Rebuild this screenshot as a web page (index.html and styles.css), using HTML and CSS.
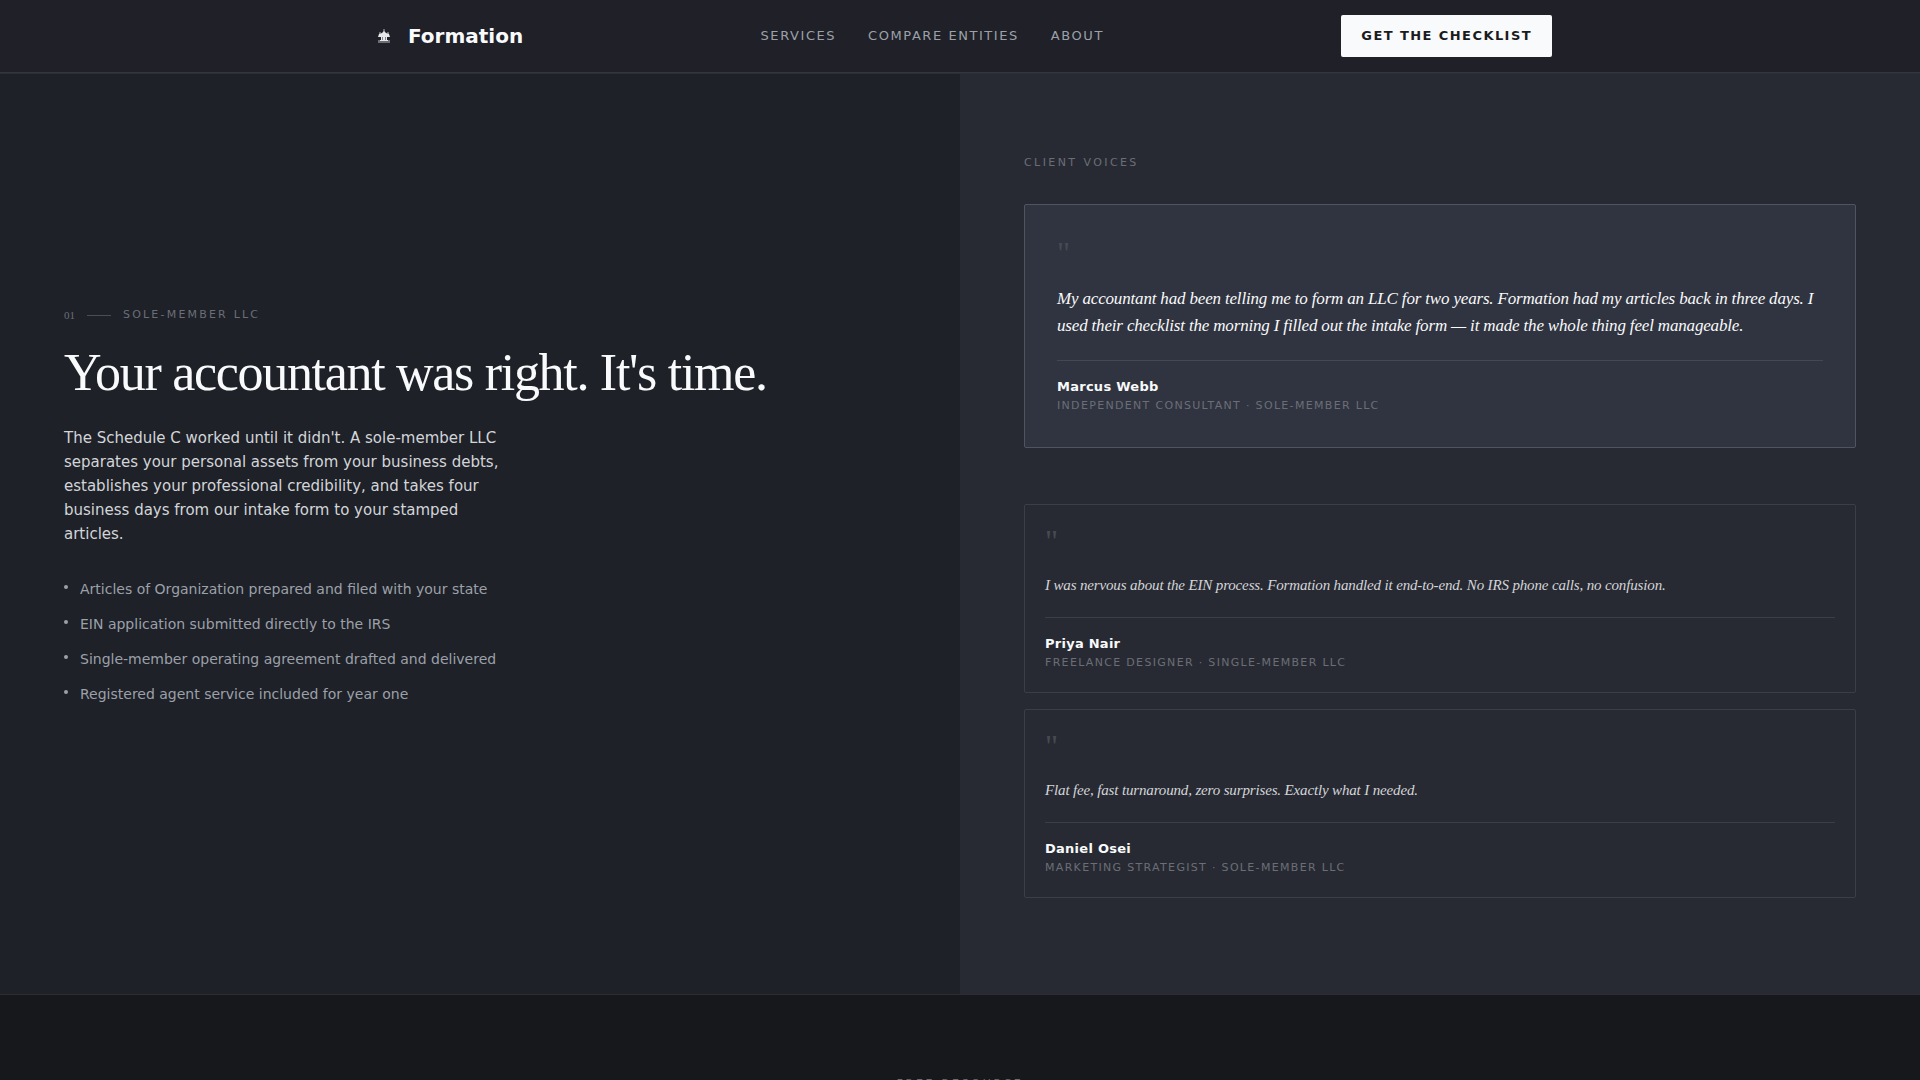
FILE: index.html
```html
<!DOCTYPE html>
<html lang="en">
<head>
  <meta charset="UTF-8" />
  <meta name="viewport" content="width=device-width, initial-scale=1.0"/>
  <title>Formation</title>
  <link rel="stylesheet" href="styles.css">
</head>
<body>

  <header class="site-header">
    <div class="header-inner">
      <a href="#" class="brand">
        <svg class="brand-mark" viewBox="0 0 32 32" aria-hidden="true">
          <path class="mark-soft" d="M15 9h2v3h-2zM11 12h2v2h-2zM19 12h2v2h-2zM10 20h3v3h-3zM19 20h3v3h-3zM13 21h6v2h-6z"/>
          <path class="mark-main" d="M16 11l2 2 3 1 1 3h-3v3h1v1h-8v-1h1v-3h-3l1-3 3-1z"/>
          <path class="mark-cut" d="M14 17h1v3h-1zM17 17h1v3h-1z"/>
        </svg>
        <span>Formation</span>
      </a>
      <nav class="site-nav">
        <a href="#services">Services</a>
        <a href="#compare">Compare Entities</a>
        <a href="#about">About</a>
      </nav>
      <button type="button" class="cta">Get the Checklist</button>
    </div>
  </header>

  <main>
    <section class="split" id="services">
      <div class="pitch">
        <div class="eyebrow">
          <span class="eyebrow-num">01</span>
          <span class="eyebrow-line"></span>
          <span class="label">Sole-Member LLC</span>
        </div>
        <h1>Your accountant was right. It's time.</h1>
        <p class="lead">The Schedule C worked until it didn't. A sole-member LLC separates your personal assets from your business debts, establishes your professional credibility, and takes four business days from our intake form to your stamped articles.</p>
        <ul class="features">
          <li>Articles of Organization prepared and filed with your state</li>
          <li>EIN application submitted directly to the IRS</li>
          <li>Single-member operating agreement drafted and delivered</li>
          <li>Registered agent service included for year one</li>
        </ul>
      </div>

      <div class="voices">
        <h2 class="label voices-title">Client Voices</h2>

        <article class="quote featured">
          <div class="quote-mark" aria-hidden="true">"</div>
          <p class="quote-text">My accountant had been telling me to form an LLC for two years. Formation had my articles back in three days. I used their checklist the morning I filled out the intake form — it made the whole thing feel manageable.</p>
          <footer>
            <div class="name">Marcus Webb</div>
            <div class="role">Independent Consultant · Sole-Member LLC</div>
          </footer>
        </article>

        <article class="quote">
          <div class="quote-mark" aria-hidden="true">"</div>
          <p class="quote-text">I was nervous about the EIN process. Formation handled it end-to-end. No IRS phone calls, no confusion.</p>
          <footer>
            <div class="name">Priya Nair</div>
            <div class="role">Freelance Designer · Single-Member LLC</div>
          </footer>
        </article>

        <article class="quote">
          <div class="quote-mark" aria-hidden="true">"</div>
          <p class="quote-text">Flat fee, fast turnaround, zero surprises. Exactly what I needed.</p>
          <footer>
            <div class="name">Daniel Osei</div>
            <div class="role">Marketing Strategist · Sole-Member LLC</div>
          </footer>
        </article>
      </div>
    </section>

    <section class="resource">
      <p class="label resource-label">Free Resource</p>
    </section>
  </main>

</body>
</html>
```
FILE: styles.css
```css
* {
  box-sizing: border-box;
  margin: 0;
  padding: 0;
}

html {
  scrollbar-width: none;
}

body {
  font-family: "DejaVu Sans", sans-serif;
  background-color: #17181b;
  color: #f9fafb;
}

a {
  color: inherit;
  text-decoration: none;
}

/* Header */
.site-header {
  background-color: #1f2028;
  border-bottom: 1px solid #33363e;
}

.header-inner {
  max-width: 1280px;
  height: 72px;
  margin: 0 auto;
  padding: 0 48px;
  display: flex;
  align-items: center;
  justify-content: space-between;
}

.brand {
  display: flex;
  align-items: center;
  gap: 8px;
  font-size: 20px;
  font-weight: bold;
}

.brand-mark {
  width: 32px;
  height: 32px;
}

.mark-soft {
  fill: #6b6d73;
}

.mark-main {
  fill: #e6e8ea;
}

.mark-cut {
  fill: #85878c;
}

.site-nav {
  display: flex;
  gap: 32px;
  padding-bottom: 2px;
  font-size: 13px;
  letter-spacing: 0.12em;
  text-transform: uppercase;
  color: #9ca0a8;
}

.cta {
  height: 42px;
  padding: 0 20px 2px;
  border: none;
  border-radius: 2px;
  background-color: #f9fafc;
  color: #1a1b20;
  font-family: inherit;
  font-size: 13px;
  font-weight: bold;
  letter-spacing: 0.11em;
  text-transform: uppercase;
  cursor: pointer;
}

/* Split section */
.split {
  display: grid;
  grid-template-columns: 1fr 1fr;
  border-top: 1px solid #2b2e36;
  border-bottom: 1px solid #2d2e33;
}

.pitch {
  display: flex;
  flex-direction: column;
  justify-content: center;
  padding: 80px 64px;
  background-color: #1e2128;
}

.label {
  font-size: 11px;
  font-weight: normal;
  line-height: 18px;
  letter-spacing: 0.2em;
  text-transform: uppercase;
  color: #6b6e77;
}

.eyebrow {
  display: flex;
  align-items: center;
  gap: 12px;
  margin-bottom: 20px;
}

.eyebrow-num {
  font-family: "Liberation Serif", serif;
  font-size: 11px;
  color: #6b6e77;
}

.eyebrow-line {
  width: 24px;
  height: 1px;
  background-color: #4b4e57;
}

h1 {
  font-family: "Liberation Serif", serif;
  font-size: 52px;
  font-weight: normal;
  line-height: 58px;
  letter-spacing: -0.025em;
  margin-bottom: 24px;
}

.lead {
  max-width: 440px;
  font-size: 15px;
  line-height: 24px;
  color: #d3d5d9;
  margin-bottom: 32px;
}

.features {
  display: grid;
  gap: 12px;
  list-style: none;
  margin-bottom: 56px;
}

.features li {
  display: flex;
  gap: 12px;
  font-size: 14px;
  line-height: 23px;
  color: #9ca0a8;
}

.features li::before {
  content: "";
  flex: none;
  width: 4px;
  height: 4px;
  margin-top: 7px;
  border-radius: 50%;
  background-color: #9ca0a8;
}

/* Testimonials */
.voices {
  padding: 80px 64px 96px;
  background-color: #272a32;
}

.voices-title {
  margin-bottom: 32px;
  letter-spacing: 0.22em;
}

.quote {
  padding: 20px;
  border: 1px solid #3b3e47;
  border-radius: 2px;
  margin-bottom: 16px;
}

.quote:last-child {
  margin-bottom: 0;
}

.quote.featured {
  padding: 32px;
  margin-bottom: 56px;
  background-color: #303440;
  border-color: #50545e;
}

.quote-mark {
  height: 32px;
  margin-bottom: 16px;
  font-family: "Liberation Serif", serif;
  font-size: 32px;
  line-height: 32px;
  color: #474a53;
}

.quote-text {
  font-family: "Liberation Serif", serif;
  font-size: 15px;
  font-style: italic;
  line-height: 24px;
  letter-spacing: -0.01em;
  color: #d3d5d9;
  margin-bottom: 20px;
}

.featured .quote-text {
  font-size: 17px;
  line-height: 27px;
  color: #f9fafb;
  margin-bottom: 21px;
}

.quote footer {
  padding-top: 16px;
  border-top: 1px solid #3b3e47;
}

.featured footer {
  border-color: #454852;
}

.name {
  font-size: 13px;
  font-weight: bold;
  line-height: 20px;
  letter-spacing: 0.02em;
}

.role {
  font-size: 11px;
  line-height: 18px;
  letter-spacing: 0.12em;
  text-transform: uppercase;
  color: #6b6e77;
}

/* Free resource */
.resource {
  padding: 80px 64px;
  text-align: center;
}

.resource-label {
  letter-spacing: 0.25em;
}
```
